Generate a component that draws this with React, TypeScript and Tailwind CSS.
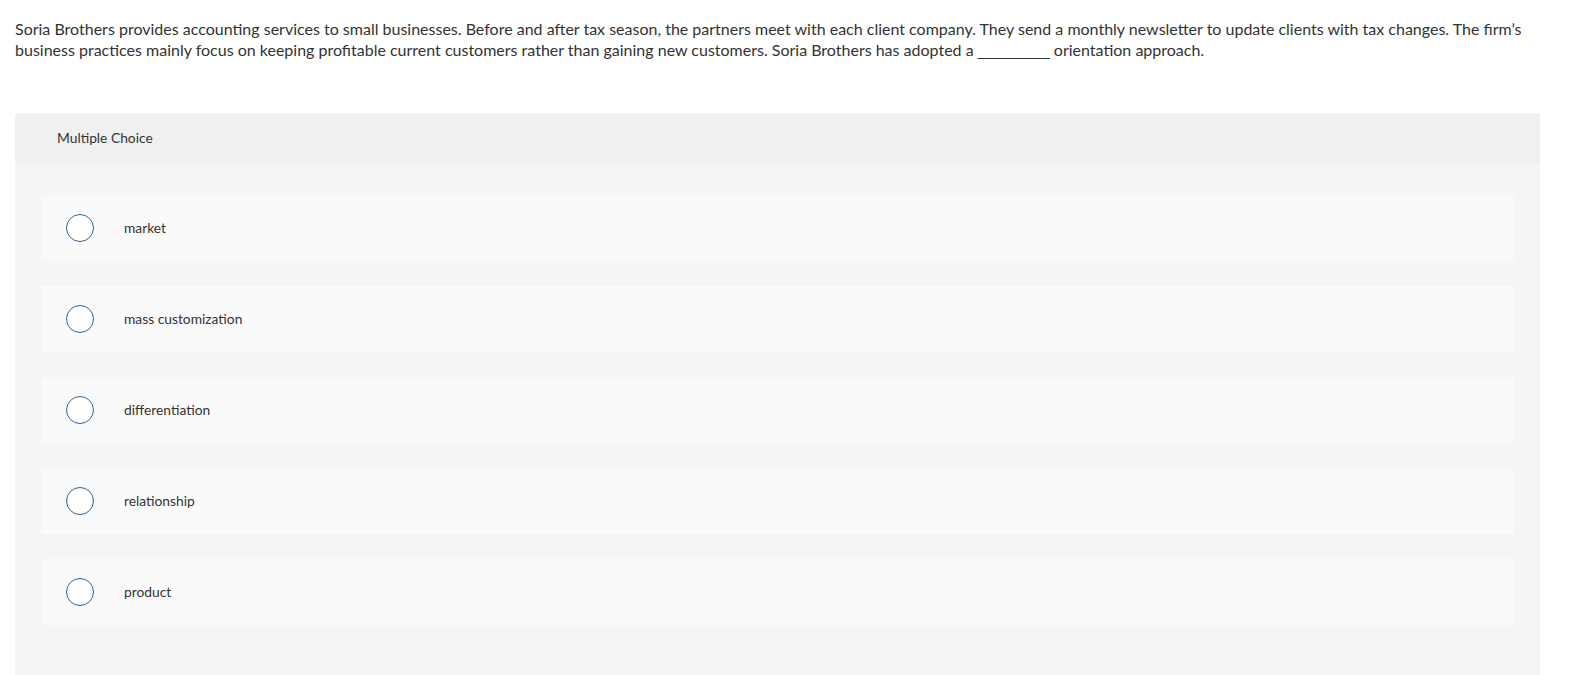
import React from "react";

const options = ["market", "mass customization", "differentiation", "relationship", "product"];

export default function App() {
  return (
    <div className="min-h-[675px] bg-white text-[#333333]" style={{ fontFamily: "Lato, 'Open Sans', sans-serif" }}>
      <div className="px-[15px] pt-[18px] text-[16px] leading-[21px]">
        Soria Brothers provides accounting services to small businesses. Before and after tax season, the partners meet with each client company. They send a monthly newsletter to update clients with tax changes. The firm’s business practices mainly focus on keeping profitable current customers rather than gaining new customers. Soria Brothers has adopted a{" "}
        <span className="font-['Liberation_Sans',sans-serif] text-[14.4px] leading-[12px]">_________</span> orientation approach.
      </div>
      <div className="mx-[15px] mt-[53px] w-[1525px] rounded-t-[3px] bg-[#f5f5f5] pb-[60px]">
        <div className="flex h-[50px] items-center rounded-t-[3px] bg-[#f0f0f0] pl-[42px] text-[13.8px]">
          Multiple Choice
        </div>
        <div className="flex flex-col gap-[25px] px-[26px] pt-[32px]">
          {options.map((o) => (
            <div key={o} className="flex h-[66px] items-center rounded-[3px] bg-[#fafafa]">
              <div className="ml-[25px] h-[28px] w-[28px] rounded-full border-[1.5px] border-[#2e6294] bg-white" />
              <div className="ml-[30px] text-[13.8px]">{o}</div>
            </div>
          ))}
        </div>
      </div>
    </div>
  );
}
